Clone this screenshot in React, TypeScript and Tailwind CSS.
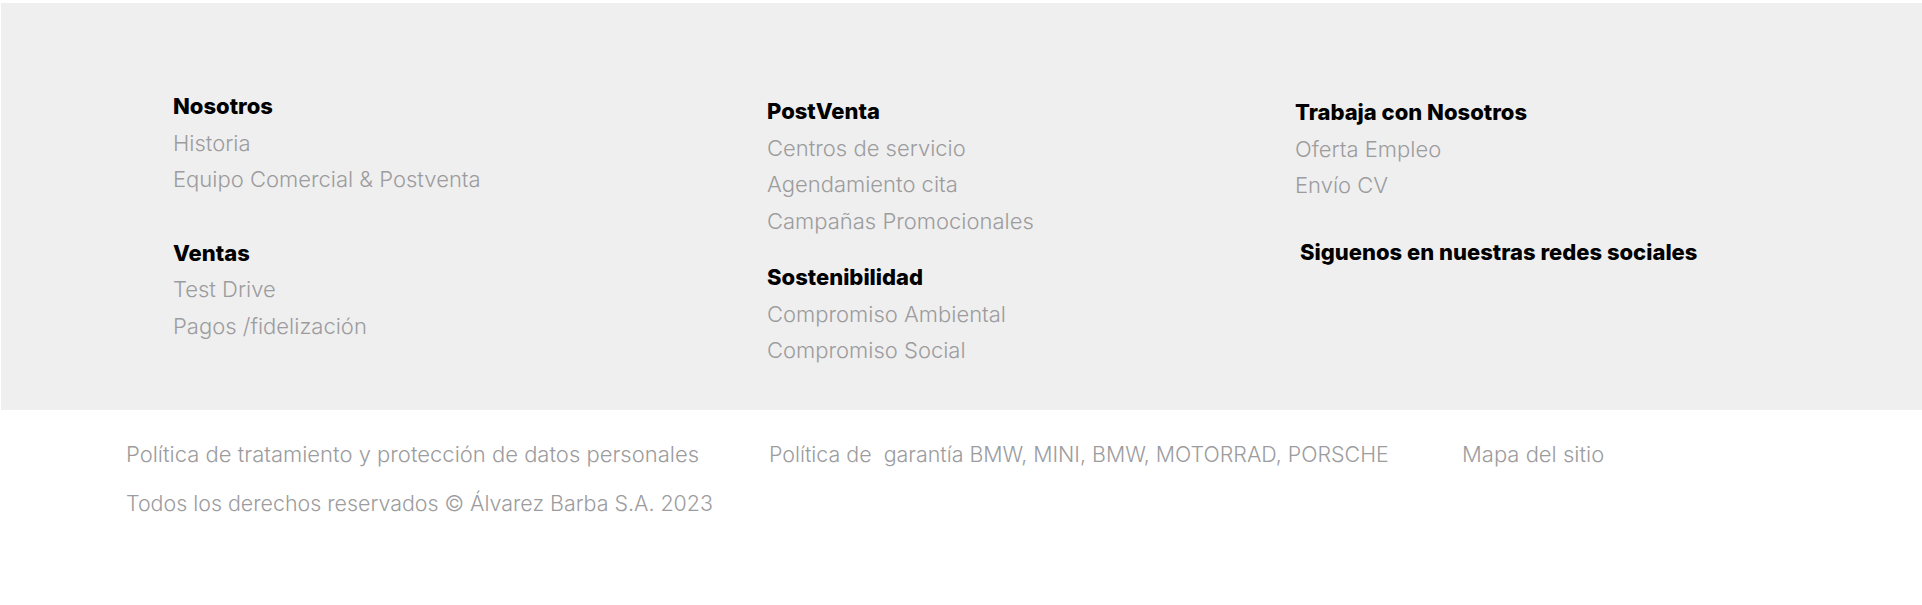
const linkCls = "block text-[22px] leading-[36.5px] font-light text-[#9c9c9e]";
const headCls = "block text-[22px] leading-[36.5px] font-extrabold text-black";

function Col({ title, links, className = "" }: { title: string; links: string[]; className?: string }) {
  return (
    <div className={className}>
      <div className={headCls}>{title}</div>
      {links.map((l) => (
        <a key={l} href="#" className={linkCls}>
          {l}
        </a>
      ))}
    </div>
  );
}

export default function App() {
  return (
    <div className="w-[1922px] h-[605px] bg-white font-['Inter',sans-serif] overflow-hidden">
      <section className="mt-[3px] ml-px h-[407px] bg-[#efefef] flex pl-[172px]">
        <div className="w-[594px] pt-[85px]">
          <Col title="Nosotros" links={["Historia", "Equipo Comercial & Postventa"]} />
          <Col title="Ventas" links={["Test Drive", "Pagos /fidelización"]} className="mt-[37px]" />
        </div>
        <div className="w-[528px] pt-[90px]">
          <Col title="PostVenta" links={["Centros de servicio", "Agendamiento cita", "Campañas Promocionales"]} />
          <Col title="Sostenibilidad" links={["Compromiso Ambiental", "Compromiso Social"]} className="mt-[20px]" />
        </div>
        <div className="pt-[91px]">
          <Col title="Trabaja con Nosotros" links={["Oferta Empleo", "Envío CV"]} />
          <div className={headCls + " mt-[30px] ml-[5px]"}>Siguenos en nuestras redes sociales</div>
        </div>
      </section>
      <footer className="pl-[126px] pt-[26px] flex flex-col gap-[12px]">
        <div className="flex">
          <a href="#" className={linkCls + " w-[643px]"}>Política de tratamiento y protección de datos personales</a>
          <a href="#" className={linkCls + " w-[693px] !text-[21.4px]"}>Política de{"\u00a0"} garantía BMW, MINI, BMW, MOTORRAD, PORSCHE</a>
          <a href="#" className={linkCls}>Mapa del sitio</a>
        </div>
        <p className={linkCls + " !text-[21.4px]"}>Todos los derechos reservados © Álvarez Barba S.A. 2023</p>
      </footer>
    </div>
  );
}
